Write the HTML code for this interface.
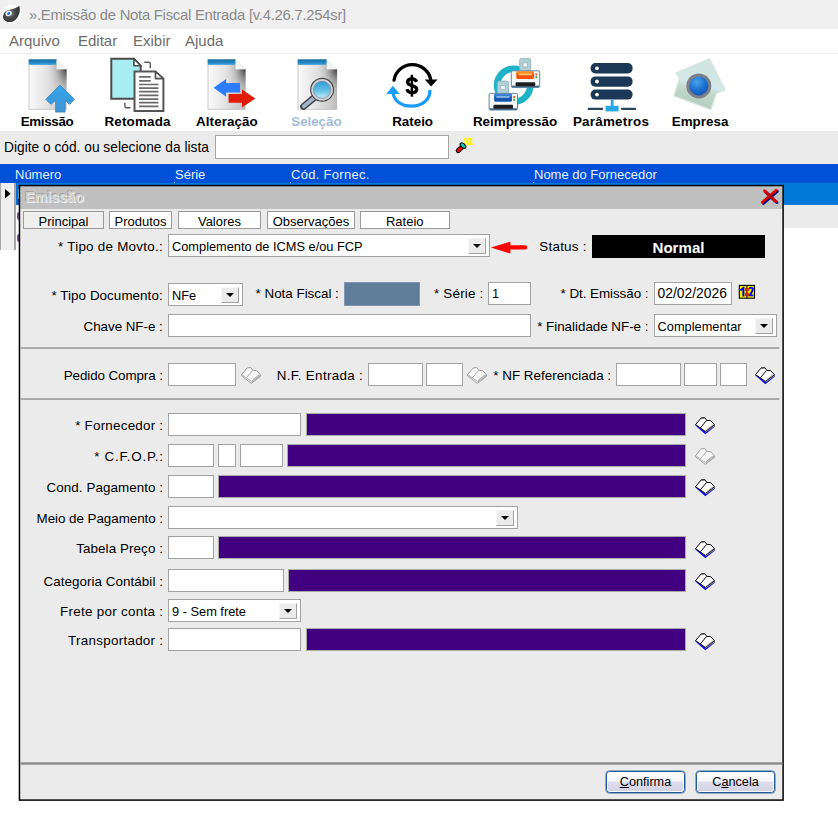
<!DOCTYPE html>
<html>
<head>
<meta charset="utf-8">
<style>
html,body{margin:0;padding:0;}
body{width:838px;height:816px;overflow:hidden;background:#fff;position:relative;font-family:"Liberation Sans",sans-serif;font-size:13px;color:#000;}
.abs{position:absolute;}
#titlebar{left:0;top:0;width:838px;height:29px;background:#f0f0f0;}
#title{left:29px;top:5.5px;font-size:14.8px;letter-spacing:-0.24px;color:#8a8a8a;white-space:nowrap;line-height:18px;}
#menubar{left:0;top:29px;width:838px;height:24px;background:#fff;border-bottom:1px solid #ebebeb;}
.menu{top:31.8px;font-size:15px;color:#6d6d6d;white-space:nowrap;line-height:18px;}
#toolbar{left:0;top:54px;width:838px;height:77px;background:#fff;}
.tlabel{top:113.6px;font-weight:bold;font-size:13.4px;white-space:nowrap;line-height:16px;}
#searchbar{left:0;top:131px;width:838px;height:33px;background:#ebebeb;}
#gridhead{left:0;top:164px;width:838px;height:19px;background:#0050d8;}
.gh{top:167px;color:#e8f0ff;font-size:13px;white-space:nowrap;line-height:16px;}
#row1{left:15px;top:183px;width:823px;height:22px;background:#0078d7;}
#row2{left:15px;top:205px;width:823px;height:23px;background:#ebebeb;}
#indic{left:0;top:183px;width:13px;height:67px;background:#eeeeee;border-left:1px solid #a8a8a8;border-right:2px solid #a6a6a6;}
#dialog{left:20px;top:186px;width:763px;height:614px;background:#ebebeb;}
#dtitle{left:0;top:0;width:763px;height:22.6px;background:#c0c0c0;}
.lbl{white-space:nowrap;line-height:16px;font-size:13.4px;text-align:right;}
.inp{background:#fff;border:1px solid #a2a2a2;box-sizing:border-box;}
.pur{background:#40007f;border:1px solid #a9a9a9;box-sizing:border-box;}
.txt{white-space:nowrap;line-height:16px;font-size:12.8px;}
.sep{height:1px;background:#8a8a8a;border-bottom:1px solid #fff;}
.tab{box-sizing:border-box;border:1px solid #9a9a9a;background:#fff;text-align:center;font-size:13px;line-height:19px;height:18px;white-space:nowrap;overflow:hidden;}
.dd{box-sizing:border-box;border:1px solid #f6f6f6;border-right-color:#a2a2a2;border-bottom-color:#a2a2a2;background:#ebebeb;}
.dd:after{content:"";position:absolute;left:4px;top:5px;border-left:4.6px solid transparent;border-right:4.6px solid transparent;border-top:4.8px solid #000;}
.btn{box-sizing:border-box;border:1px solid #1f5a98;border-radius:3.5px;background:linear-gradient(#ffffff,#f4f4fa 45%,#dddded 52%,#d2d2e4);text-align:center;font-size:12.7px;line-height:21px;box-shadow:inset 0 0 0 1px rgba(255,255,255,0.85),0 0 0 0.5px #3a6ea5;}
</style>
</head>
<body>
<div id="titlebar" class="abs"></div>
<div id="title" class="abs">».Emissão de Nota Fiscal Entrada [v.4.26.7.254sr]</div>
<div id="menubar" class="abs"></div>
<div class="abs menu" style="left:9px">Arquivo</div>
<div class="abs menu" style="left:78px">Editar</div>
<div class="abs menu" style="left:133px">Exibir</div>
<div class="abs menu" style="left:185px">Ajuda</div>
<div id="toolbar" class="abs"></div>
<!--ICONS-START-->
<svg class="abs" style="left:0;top:0" width="838" height="132" viewBox="0 0 838 132">
<defs>
<linearGradient id="gDoc" x1="0" y1="0" x2="1" y2="0"><stop offset="0" stop-color="#fbfbfb"/><stop offset="0.45" stop-color="#e4e4e4"/><stop offset="0.8" stop-color="#cdcdcd"/><stop offset="1" stop-color="#b9b9b9"/></linearGradient>
<radialGradient id="gDocSh" gradientUnits="userSpaceOnUse" cx="38" cy="9" r="30" gradientTransform="translate(38 9) scale(0.62 1) translate(-38 -9)"><stop offset="0" stop-color="#2e2e2e" stop-opacity="0.95"/><stop offset="0.3" stop-color="#5a5a5a" stop-opacity="0.6"/><stop offset="0.65" stop-color="#909090" stop-opacity="0.22"/><stop offset="1" stop-color="#b0b0b0" stop-opacity="0"/></radialGradient>
<linearGradient id="gBar" x1="0" y1="0" x2="0" y2="1"><stop offset="0" stop-color="#1a6f9f"/><stop offset="0.5" stop-color="#1d83c0"/><stop offset="1" stop-color="#4aa3dc"/></linearGradient>
<linearGradient id="gArr" x1="0" y1="0" x2="0" y2="1"><stop offset="0" stop-color="#35a6ea"/><stop offset="1" stop-color="#3f93d2"/></linearGradient>
<linearGradient id="gLens" x1="0" y1="0" x2="0" y2="1"><stop offset="0" stop-color="#2f9cd8"/><stop offset="0.5" stop-color="#5cbce4"/><stop offset="1" stop-color="#c4ecf6"/></linearGradient>
<radialGradient id="gBall" cx="0.4" cy="0.3" r="0.8"><stop offset="0" stop-color="#4aa4e6"/><stop offset="0.5" stop-color="#1e74d2"/><stop offset="1" stop-color="#0e4fae"/></radialGradient>
<g id="doc">
<path d="M0 0 H28 L38 10 V50.3 H0 Z" fill="url(#gDoc)"/>
<path d="M10 5.5 H28 V10 H38 V50.3 H10 Z" fill="url(#gDocSh)"/>
<path d="M0 0 H28 V5.6 H0 Z" fill="url(#gBar)"/>
<path d="M28 0 L38 10 H28 Z" fill="#f4f4f4"/>
<path d="M0.4 5.6 V50 H37.6" fill="none" stroke="#bdbdbd" stroke-width="0.8"/>
</g>
</defs>
<!-- app icon -->
<defs><radialGradient id="gApp" cx="0.4" cy="0.45" r="0.7"><stop offset="0" stop-color="#8a8a8a"/><stop offset="0.45" stop-color="#4a4a4a"/><stop offset="1" stop-color="#2a2a2a"/></radialGradient></defs>
<ellipse cx="11.6" cy="14" rx="9.8" ry="9.6" fill="#fbfbfb"/>
<path d="M19.2 6 C20.4 9 20 14 17.2 17.8 C15.4 20.4 13 22 10.6 22.1 C7.6 22.3 4.4 21.2 3.3 18.4 C2.6 16 3.4 13.6 5 12 C6.6 10.4 9 9.6 11.5 9.2 C14.5 8.7 17 7.6 19.2 6 Z" fill="url(#gApp)"/>
<ellipse cx="8.7" cy="13.4" rx="3.2" ry="2.7" transform="rotate(-25 8.7 13.4)" fill="#f2f6fa"/>
<ellipse cx="8.7" cy="13.5" rx="1.7" ry="1.3" transform="rotate(-25 8.7 13.5)" fill="#1a74d6"/>
<!-- Emissao -->
<use href="#doc" x="28.6" y="59.3"/>
<path d="M59.9 85.1 L74.6 99.3 L69.4 104.4 L65.1 100.2 V112.1 H55.6 V100.2 L50.9 104.4 L45.8 99.3 Z" fill="url(#gArr)" stroke="#3a86c2" stroke-width="0.8" stroke-linejoin="round"/>
<!-- Retomada -->
<path d="M111.3 58.8 H133.9 L140.7 65.7 V98.7 H111.3 Z" fill="#a8edf1" stroke="#4b4b4b" stroke-width="2" stroke-linejoin="miter"/>
<path d="M133.9 58.8 V65.7 H140.7 Z" fill="#fff" stroke="#4b4b4b" stroke-width="1.6" stroke-linejoin="round"/>
<path d="M134.5 71.5 H155.4 L163.4 78.6 V111.1 H134.5 Z" fill="#fff" stroke="#555" stroke-width="2"/>
<path d="M155.4 71.5 V78.6 H163.4 Z" fill="#ececec" stroke="#555" stroke-width="1.6" stroke-linejoin="round"/>
<path d="M139.1 76.9 H150.7 M139.1 80.8 H150.7 M139.1 84.5 H158.4 M139.1 88.1 H158.4 M139.1 91.7 H158.4 M139.1 95.4 H158.4 M139.1 99.1 H158.4 M139.1 102.7 H158.4 M139.1 106.4 H158.4" stroke="#6a6a6a" stroke-width="1.7" fill="none"/>
<path d="M144.2 62.3 H148.8 Q150.3 62.3 150.3 63.8 V68.3" fill="none" stroke="#5a5a5a" stroke-width="1.4"/>
<path d="M124.9 102.7 V106.3 Q124.9 107.8 126.4 107.8 H130.5" fill="none" stroke="#5a5a5a" stroke-width="1.4"/>
<!-- Alteracao -->
<use href="#doc" x="207.6" y="59.3"/>
<path d="M213.6 87.7 L226.1 79.1 V83.1 H240 V92.4 H226.1 V96.7 Z" fill="#2b7cff"/>
<path d="M255.3 98.4 L242 89.4 V94.1 H228.6 V102.7 H242 V107.4 Z" fill="#e11b05"/>
<!-- Selecao -->
<use href="#doc" transform="translate(297.6 59.3) scale(1.04 1)"/>
<path d="M314.8 97.2 L303.6 106.5" stroke="#3c3c3c" stroke-width="6.8" stroke-linecap="round" fill="none"/>
<path d="M314.6 97.4 L303.8 106.3" stroke="#9db3c7" stroke-width="4" stroke-linecap="round" fill="none"/>
<circle cx="322.1" cy="89.8" r="11.4" fill="#d0d2d8" stroke="#4a4a4a" stroke-width="1.2"/>
<circle cx="322.1" cy="89.8" r="8.6" fill="url(#gLens)" stroke="#7d8792" stroke-width="0.8"/>
<!-- Rateio -->
<path d="M394 80.2 A18.7 18.7 0 0 1 430.8 79.8" fill="none" stroke="#000" stroke-width="3.3" stroke-linecap="round"/>
<path d="M424.8 79.5 H437.6 L431.1 86.6 Z" fill="#000"/>
<path d="M429.9 89.8 C430.4 100 422 106.1 411.4 106.1 C401 106.1 393.4 100.4 393.1 92" fill="none" stroke="#1a9cff" stroke-width="3.3"/>
<path d="M386.3 93.9 H399.7 L392.8 85.8 Z" fill="#1a9cff"/>
<path d="M416.6 81.9 C415.8 79.7 414 78.9 411.9 78.9 C409.4 78.9 407.6 80.2 407.6 82.3 C407.6 86.7 416.7 84.6 416.7 89.3 C416.7 91.5 414.7 92.7 412 92.7 C409.5 92.7 407.6 91.6 407 89.2" fill="none" stroke="#000" stroke-width="3.3"/>
<path d="M411.9 74.8 V96.7" stroke="#000" stroke-width="2.5"/>
<!-- Reimpressao -->
<circle cx="513.7" cy="85.3" r="16.6" fill="none" stroke="#1eb2c6" stroke-width="6.6"/>
<g id="prt">
<path d="M519.6 60.4 Q519.6 58.4 521.6 58.4 H528.8 Q530.8 58.4 530.8 60.4 V72 H519.6 Z" fill="#b2ced7" stroke="#8eb0bb" stroke-width="0.8"/>
<rect x="523" y="62.8" width="4.4" height="4.2" fill="#eef4f6" stroke="#8aa6b0" stroke-width="0.6"/>
<rect x="511.3" y="70.8" width="28.4" height="16.6" rx="1.4" fill="#f5f8fa" stroke="#5c87a3" stroke-width="1"/>
<rect x="511.8" y="85.6" width="27.4" height="1.8" fill="#4a6f8a"/>
<rect x="515.6" y="82.2" width="19.6" height="4" rx="1" fill="#1e1e22"/>
<rect x="535.4" y="73.4" width="1.9" height="2.1" fill="#f0642a"/><rect x="535.4" y="76.1" width="1.9" height="2.1" fill="#4cb04c"/>
</g>
<rect x="516.3" y="71.5" width="17.8" height="7.6" rx="1.4" fill="#f4520e"/>
<rect x="516.3" y="71.5" width="17.8" height="2.6" rx="1.3" fill="#f78a1c"/>
<rect x="518.4" y="73.6" width="13.6" height="1.6" rx="0.8" fill="#fbc46a"/>
<use href="#prt" x="-22.2" y="22.6"/>
<rect x="494.1" y="94.1" width="17.8" height="7.6" rx="1.4" fill="#1554ac"/>
<rect x="494.1" y="94.1" width="17.8" height="2.6" rx="1.3" fill="#3b7fd2"/>
<rect x="496.2" y="96.2" width="13.6" height="1.6" rx="0.8" fill="#9cc6ee"/>
<!-- Parametros -->
<rect x="590.6" y="63.1" width="42" height="10.4" rx="4.8" fill="#1b3957"/>
<rect x="590.6" y="76.4" width="42" height="10.3" rx="4.8" fill="#1b3957"/>
<rect x="590.6" y="89.5" width="42" height="10.1" rx="4.8" fill="#1b3957"/>
<circle cx="597" cy="68.3" r="1.9" fill="#fff"/><circle cx="597" cy="81.5" r="1.9" fill="#fff"/><circle cx="597" cy="94.6" r="1.9" fill="#fff"/>
<rect x="610.8" y="99.4" width="2.7" height="7" fill="#29a9e1"/>
<rect x="605.6" y="105.8" width="13" height="5.6" fill="#29a9e1"/>
<rect x="587.6" y="107.7" width="15.6" height="2.2" rx="1" fill="#2a4660"/>
<rect x="621" y="107.7" width="15.2" height="2.2" rx="1" fill="#2a4660"/>
<!-- Empresa -->
<defs><linearGradient id="gHouse" x1="0.6" y1="0" x2="0.35" y2="1"><stop offset="0" stop-color="#cfe5dc"/><stop offset="0.5" stop-color="#d3e8ea"/><stop offset="0.62" stop-color="#c2d8cb"/><stop offset="1" stop-color="#b3c8bc"/></linearGradient></defs>
<path d="M709.5 58.9 L725 89.8 L716.4 93.2 L710.8 109.6 L673.9 95.8 L679.9 77.8 L676 73 Z" fill="url(#gHouse)" stroke="#d5e6de" stroke-width="1.4" stroke-linejoin="round"/>
<circle cx="698.8" cy="85.9" r="12.5" fill="#7e7f88"/>
<circle cx="698.8" cy="85.9" r="9.5" fill="url(#gBall)"/>
</svg>
<div class="abs tlabel" style="left:20.7px;letter-spacing:-0.34px;">Emissão</div>
<div class="abs tlabel" style="left:104.5px;letter-spacing:0.17px;">Retomada</div>
<div class="abs tlabel" style="left:196.1px;letter-spacing:0.07px;">Alteração</div>
<div class="abs tlabel" style="left:291.3px;letter-spacing:-0.06px;color:#a3bbdb;">Seleção</div>
<div class="abs tlabel" style="left:392.2px;letter-spacing:-0.02px;">Rateio</div>
<div class="abs tlabel" style="left:472.9px;letter-spacing:0.01px;">Reimpressão</div>
<div class="abs tlabel" style="left:572.9px;letter-spacing:0.25px;">Parâmetros</div>
<div class="abs tlabel" style="left:671.7px;letter-spacing:0.04px;">Empresa</div>
<!--ICONS-END-->
<div id="searchbar" class="abs"></div>
<div class="abs" style="left:4px;top:140px;font-size:13.75px;line-height:16px;white-space:nowrap;">Digite o cód. ou selecione da lista</div>
<div class="abs" style="left:215px;top:135px;width:234px;height:24px;box-sizing:border-box;border:1px solid #a6a6a6;background:#fff;"></div>
<svg class="abs" style="left:454px;top:136px" width="22" height="20" viewBox="454 136 22 20">
<g fill="#f7f200"><rect x="463.6" y="137.7" width="9" height="7.6" opacity="0.4"/><rect x="464" y="138" width="2" height="2"/><rect x="467" y="138" width="2" height="2"/><rect x="470" y="138" width="2" height="2"/><rect x="465.5" y="140.5" width="2" height="2"/><rect x="469" y="140.5" width="2" height="2"/><rect x="464" y="143" width="2" height="2"/><rect x="467" y="143" width="2" height="2"/><rect x="470" y="143" width="2.4" height="2"/></g>
<path d="M458.2 150.6 L462.2 147" stroke="#000" stroke-width="5" stroke-linecap="round"/>
<path d="M458.3 150.5 L462.2 147.1" stroke="#f00000" stroke-width="3" stroke-linecap="round"/>
<ellipse cx="463" cy="145.6" rx="3.4" ry="1.9" transform="rotate(42 463 145.6)" fill="#00d8d8" stroke="#000" stroke-width="1.1"/>
</svg>
<div id="gridhead" class="abs"></div>
<div class="abs gh" style="left:15px;">Número</div>
<div class="abs gh" style="left:175px;">Série</div>
<div class="abs gh" style="left:291px;letter-spacing:0.3px;">Cód. Fornec.</div>
<div class="abs gh" style="left:534px;">Nome do Fornecedor</div>
<div class="abs" style="left:174px;top:182px;width:1px;height:2px;background:#b9cdf2;"></div><div class="abs" style="left:290px;top:182px;width:1px;height:2px;background:#b9cdf2;"></div><div class="abs" style="left:533px;top:182px;width:1px;height:2px;background:#b9cdf2;"></div>
<div id="row1" class="abs"></div>
<div id="row2" class="abs"></div>
<div id="indic" class="abs"></div>
<svg class="abs" style="left:4px;top:188px" width="8" height="12" viewBox="0 0 8 12"><path d="M1 1 L6.6 5.8 L1 10.6 Z" fill="#000"/></svg>
<div class="abs" style="left:16px;top:183px;width:3px;height:22px;background:#0a6ad2;"></div><div class="abs" style="left:17.5px;top:189px;width:1.5px;height:10px;background:#7fd0f0;border-radius:1px;"></div>
<div class="abs" style="left:16px;top:205px;width:3px;height:44px;background:#fff;"></div>
<div class="abs" style="left:17px;top:212px;width:2px;height:8px;background:#8a4a9a;border-radius:2px 0 0 2px;"></div>
<div class="abs" style="left:17px;top:234px;width:2px;height:8px;background:#8a4a9a;border-radius:2px 0 0 2px;"></div>
<div id="dialog" class="abs">
<div id="dtitle" class="abs"></div>
<!--DIALOG-START-->
<div class="abs" style="left:-20px;top:-186px;width:838px;height:816px;">
<div class="abs" id="dtxt" style="left:25px;top:189px;font-weight:bold;font-size:14.3px;line-height:16px;color:#cfcfcf;text-shadow:1px 1px 0 #f0f0f0,-1px -1px 0 #a4a0a0;">Emissão</div>
<svg class="abs" style="left:758px;top:186px" width="24" height="20" viewBox="758 185.3 24 20"><path d="M765.6 191.1 L776.8 201.8 M777.2 190.6 L763.4 202.6" stroke="#00007c" stroke-width="3" stroke-linecap="round" fill="none"/><path d="M764.5 190 L775.7 200.7 M776.1 189.6 L762.3 201.5" stroke="#e80000" stroke-width="2.7" stroke-linecap="round" fill="none"/><path d="M767.5 193 L773 198" stroke="#900000" stroke-width="2.2" stroke-linecap="round" fill="none" opacity="0.7"/></svg>
<!-- tabs -->
<div class="abs tab" style="left:23px;top:211px;width:81px;background:#efefef;">Principal</div>
<div class="abs tab" style="left:109px;top:211px;width:63px;">Produtos</div>
<div class="abs tab" style="left:178px;top:211px;width:83px;">Valores</div>
<div class="abs tab" style="left:267px;top:211px;width:88px;">Observações</div>
<div class="abs tab" style="left:360px;top:211px;width:89.5px;">Rateio</div>
<!-- row 1 -->
<div class="abs lbl" style="left:58.0px;top:239px;text-align:left;letter-spacing:0.26px;">* Tipo de Movto.:</div>
<div class="abs inp" style="left:168px;top:234px;width:322px;height:23px;"></div>
<div class="abs txt" style="left:172px;top:239px;">Complemento de ICMS e/ou FCP</div>
<div class="abs dd" style="left:468px;top:238px;width:18px;height:16px;"></div>
<svg class="abs" style="left:490px;top:240px" width="40" height="16" viewBox="490 240 40 16"><path d="M490.8 247.4 L510.4 241.7 V253.6 Z" fill="#ff0000"/><path d="M509 247.4 H525" stroke="#ff0000" stroke-width="4.4" stroke-linecap="round"/></svg>
<div class="abs lbl" style="left:539.3px;top:239px;text-align:left;letter-spacing:0.25px;">Status :</div>
<div class="abs" style="left:592px;top:235px;width:173px;height:23px;background:#000;color:#fff;font-weight:bold;font-size:15.1px;line-height:25.5px;text-align:center;overflow:hidden;">Normal</div>
<!-- row 2 -->
<div class="abs lbl" style="left:51.5px;top:288px;text-align:left;letter-spacing:0.06px;">* Tipo Documento:</div>
<div class="abs inp" style="left:168px;top:283px;width:75px;height:23px;"></div>
<div class="abs txt" style="left:172px;top:288px;">NFe</div>
<div class="abs dd" style="left:221px;top:287px;width:18px;height:16px;"></div>
<div class="abs lbl" style="left:255.6px;top:286px;text-align:left;letter-spacing:-0.01px;">* Nota Fiscal :</div>
<div class="abs" style="left:344px;top:282px;width:76px;height:24px;background:#607d9a;box-sizing:border-box;border:1px solid #8196ad;"></div>
<div class="abs lbl" style="left:434.0px;top:286px;text-align:left;letter-spacing:0.21px;">* Série :</div>
<div class="abs inp" style="left:488px;top:282px;width:43px;height:23px;"></div>
<div class="abs txt" style="left:492px;top:286px;">1</div>
<div class="abs lbl" style="left:560.6px;top:286px;text-align:left;letter-spacing:-0.05px;">* Dt. Emissão :</div>
<div class="abs inp" style="left:654px;top:282px;width:78px;height:23px;"></div>
<div class="abs txt" style="left:657.6px;top:285.2px;font-size:13.85px;">02/02/2026</div>
<svg class="abs" style="left:738px;top:284px" width="18" height="16" viewBox="738 284 18 16">
<rect x="739.3" y="285.4" width="15.2" height="12.8" fill="#f8f000" stroke="#000" stroke-width="1.1"/>
<path d="M746.9 285.4 V298.2" stroke="#000" stroke-width="1"/>
<path d="M740.4 290.4 L743.4 288 V296.4" stroke="#0000f0" stroke-width="2" fill="none"/>
<path d="M749.4 289 Q749.4 287.6 751 287.6 Q752.8 287.6 752.8 289.2 Q752.8 290.6 749.6 295.4 H753.4" stroke="#0000f0" stroke-width="1.9" fill="none"/>
<circle cx="746.9" cy="289.6" r="1.5" fill="none" stroke="#f01000" stroke-width="1.3"/>
<circle cx="746.9" cy="294.4" r="1.5" fill="none" stroke="#f01000" stroke-width="1.3"/>
</svg>

<!-- row 3 -->
<div class="abs lbl" style="left:83.6px;top:319px;text-align:left;letter-spacing:-0.05px;">Chave NF-e :</div>
<div class="abs inp" style="left:168px;top:314px;width:363px;height:23px;"></div>
<div class="abs lbl" style="left:537.2px;top:319px;text-align:left;letter-spacing:-0.02px;">* Finalidade NF-e :</div>
<div class="abs inp" style="left:654px;top:314px;width:123px;height:23px;"></div>
<div class="abs txt" style="left:657.6px;top:319px;">Complementar</div>
<div class="abs dd" style="left:755px;top:318px;width:18px;height:16px;"></div>
<!-- row 4 -->
<div class="abs lbl" style="left:63.7px;top:368px;text-align:left;letter-spacing:-0.09px;">Pedido Compra :</div>
<div class="abs inp" style="left:168px;top:363px;width:68px;height:23px;"></div>
<div class="abs lbl" style="left:276.7px;top:368px;text-align:left;letter-spacing:0.33px;">N.F. Entrada :</div>
<div class="abs inp" style="left:368px;top:363px;width:55px;height:23px;"></div>
<div class="abs inp" style="left:425.5px;top:363px;width:37px;height:23px;"></div>
<div class="abs lbl" style="left:493.3px;top:368px;text-align:left;letter-spacing:0.01px;">* NF Referenciada :</div>
<div class="abs inp" style="left:616px;top:363px;width:65px;height:23px;"></div>
<div class="abs inp" style="left:684px;top:363px;width:33px;height:23px;"></div>
<div class="abs inp" style="left:720px;top:363px;width:27px;height:23px;"></div>
<!-- lower -->
<div class="abs lbl" style="left:75.2px;top:418px;text-align:left;letter-spacing:0.23px;">* Fornecedor :</div>
<div class="abs inp" style="left:168px;top:413px;width:133px;height:23px;"></div>
<div class="abs pur" style="left:306px;top:413px;width:380px;height:23px;"></div>
<div class="abs lbl" style="left:94.2px;top:449px;text-align:left;letter-spacing:0.73px;">* C.F.O.P.:</div>
<div class="abs inp" style="left:168px;top:444px;width:46px;height:23px;"></div>
<div class="abs inp" style="left:218px;top:444px;width:18px;height:23px;"></div>
<div class="abs inp" style="left:240px;top:444px;width:43px;height:23px;"></div>
<div class="abs pur" style="left:287px;top:444px;width:399px;height:23px;"></div>
<div class="abs lbl" style="left:46.6px;top:480px;text-align:left;letter-spacing:0.06px;">Cond. Pagamento :</div>
<div class="abs inp" style="left:168px;top:475px;width:46px;height:23px;"></div>
<div class="abs pur" style="left:218px;top:475px;width:468px;height:23px;"></div>
<div class="abs lbl" style="left:36.6px;top:511px;text-align:left;letter-spacing:-0.05px;">Meio de Pagamento :</div>
<div class="abs inp" style="left:168px;top:506px;width:350px;height:23px;"></div>
<div class="abs dd" style="left:496px;top:510px;width:18px;height:16px;"></div>
<div class="abs lbl" style="left:76.2px;top:541px;text-align:left;letter-spacing:0.09px;">Tabela Preço :</div>
<div class="abs inp" style="left:168px;top:536px;width:46px;height:23px;"></div>
<div class="abs pur" style="left:218px;top:536px;width:468px;height:23px;"></div>
<div class="abs lbl" style="left:43.6px;top:574px;text-align:left;letter-spacing:0.05px;">Categoria Contábil :</div>
<div class="abs inp" style="left:168px;top:569px;width:116px;height:23px;"></div>
<div class="abs pur" style="left:288px;top:569px;width:398px;height:23px;"></div>
<div class="abs lbl" style="left:60.0px;top:603.5px;text-align:left;letter-spacing:0.30px;">Frete por conta :</div>
<div class="abs inp" style="left:168px;top:599px;width:133px;height:23px;"></div>
<div class="abs txt" style="left:172px;top:604px;">9 - Sem frete</div>
<div class="abs dd" style="left:279px;top:603px;width:18px;height:16px;"></div>
<div class="abs lbl" style="left:68.1px;top:632.5px;text-align:left;letter-spacing:0.28px;">Transportador :</div>
<div class="abs inp" style="left:168px;top:628px;width:133px;height:23px;"></div>
<div class="abs pur" style="left:306px;top:628px;width:380px;height:23px;"></div>
<svg width="0" height="0" style="position:absolute"><defs>
<g id="bk">
<path d="M0.4 8.4 L10.8 17.2 L20.6 9.8 L20.5 8 L10.8 14.6 L0.5 7.4 Z" fill="#0a0af0"/>
<path d="M10.8 14.2 L20.4 7.7 L20.4 9.2 L10.8 15.8 Z" fill="#6e6e6e"/>
<path d="M11.4 14.6 L20 8.8" stroke="#e8e8e8" stroke-width="0.5" fill="none"/>
<path d="M0.6 7.6 L6.5 0.9 L10.2 0.5 L12.3 3.3 L16.6 3.75 L20.4 7.8 L10.8 14.4 Z" fill="#fff" stroke="#000" stroke-width="1" stroke-linejoin="round"/>
<path d="M12.3 3.3 L5.6 10.8" stroke="#000" stroke-width="1" fill="none"/>
<path d="M6.8 0.9 H10.2" stroke="#4a4a4a" stroke-width="1.4" fill="none"/>
<path d="M12 13 L19.2 7.6" stroke="#8a8a8a" stroke-width="0.9" fill="none"/>
</g>
<g id="bkd">
<path d="M0.6 7.6 L6.5 0.9 L10.2 0.5 L12.3 3.3 L16.6 3.75 L20.4 7.8 L20.4 9.4 L10.8 16.4 L0.6 8.8 Z" fill="#f6f6f6" stroke="#9c9c9c" stroke-width="1" stroke-linejoin="round"/>
<path d="M0.6 7.6 L10.8 14.4 L20.4 7.8 M12.3 3.3 L5.6 10.8 M12 13 L19.2 7.6 M11.2 15.2 L20 9" stroke="#a6a6a6" stroke-width="0.9" fill="none"/>
</g>
</defs></svg>
<svg class="abs" style="left:754.5px;top:367.2px" width="21" height="18" viewBox="0 0 22 18" preserveAspectRatio="none"><use href="#bk"/></svg>
<svg class="abs" style="left:240.7px;top:367.2px" width="21" height="18" viewBox="0 0 22 18" preserveAspectRatio="none"><use href="#bkd"/></svg>
<svg class="abs" style="left:467px;top:367.2px" width="21" height="18" viewBox="0 0 22 18" preserveAspectRatio="none"><use href="#bkd"/></svg>
<svg class="abs" style="left:694.5px;top:417px" width="21" height="18" viewBox="0 0 22 18" preserveAspectRatio="none"><use href="#bk"/></svg>
<svg class="abs" style="left:694.5px;top:448.4px" width="21" height="18" viewBox="0 0 22 18" preserveAspectRatio="none"><use href="#bkd"/></svg>
<svg class="abs" style="left:694.5px;top:479px" width="21" height="18" viewBox="0 0 22 18" preserveAspectRatio="none"><use href="#bk"/></svg>
<svg class="abs" style="left:694.5px;top:541px" width="21" height="18" viewBox="0 0 22 18" preserveAspectRatio="none"><use href="#bk"/></svg>
<svg class="abs" style="left:694.5px;top:573px" width="21" height="18" viewBox="0 0 22 18" preserveAspectRatio="none"><use href="#bk"/></svg>
<svg class="abs" style="left:694.5px;top:633px" width="21" height="18" viewBox="0 0 22 18" preserveAspectRatio="none"><use href="#bk"/></svg>

<div class="abs btn" style="left:606px;top:771px;width:79px;height:22px;"><u>C</u>onfirma</div>
<div class="abs btn" style="left:696px;top:771px;width:79px;height:22px;">C<u>a</u>ncela</div>
</div>
<!--DIALOG-END-->
</div>
<svg class="abs" style="left:0;top:0;pointer-events:none" width="838" height="816" viewBox="0 0 838 816">
<rect x="19.45" y="185.55" width="763.65" height="614.55" fill="none" stroke="#000" stroke-width="1.5"/>
<rect x="20.4" y="347.2" width="759" height="1.7" fill="#a0a0a0"/>
<rect x="20.4" y="398.2" width="759" height="1.7" fill="#a0a0a0"/>
<rect x="20.4" y="762.3" width="762" height="2.4" fill="#8a8a8a"/>
</svg>

</body>
</html>
